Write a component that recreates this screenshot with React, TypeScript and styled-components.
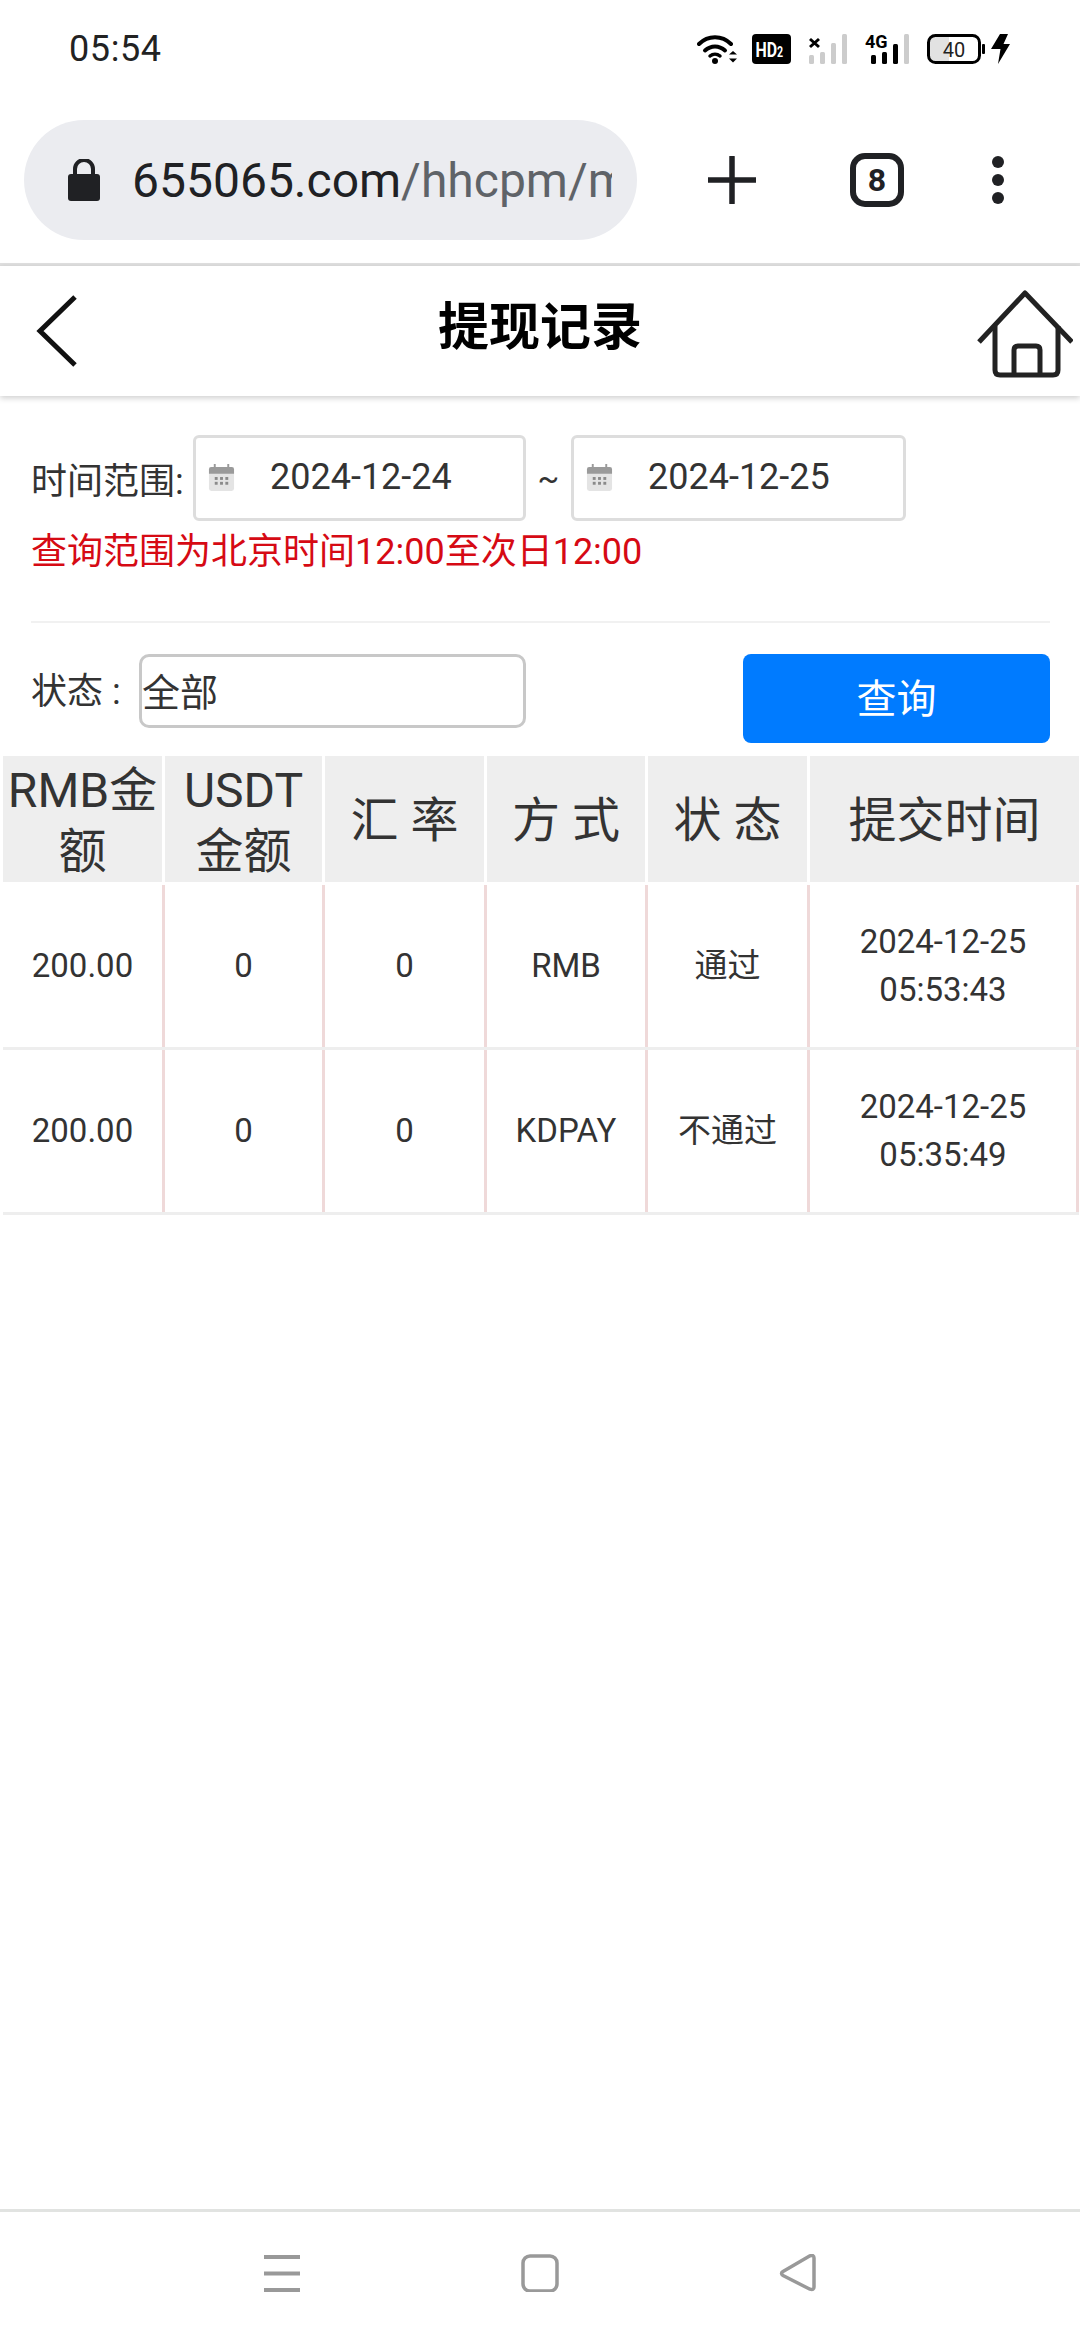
import React from "react";
import styled, { createGlobalStyle } from "styled-components";

const Global = createGlobalStyle`
  html, body { margin: 0; padding: 0; background: #fff; }
  * { box-sizing: border-box; }
  body { font-family: Roboto, "Noto Sans CJK SC", sans-serif; color: #333; }
`;

const Page = styled.div`
  width: 1080px;
  height: 2340px;
  display: flex;
  flex-direction: column;
  overflow: hidden;
  background: #fff;
`;

/* ---------- phone status bar ---------- */
const StatusBar = styled.div`
  height: 100px;
  flex: none;
  display: flex;
  align-items: center;
  padding: 0 70px 2px 69px;
  justify-content: space-between;
`;
const Clock = styled.span`
  font-size: 36px;
  color: #222;
  letter-spacing: 0.6px;
`;
const StatusIcons = styled.div`
  display: flex;
  align-items: center;
  gap: 0;
`;
const StatusSvg = styled.svg<{ $ml?: number }>`
  display: block;
  margin-left: ${(p) => p.$ml ?? 0}px;
`;

/* ---------- browser toolbar ---------- */
const BrowserBar = styled.div`
  height: 166px;
  flex: none;
  display: flex;
  align-items: flex-start;
  padding: 20px 0 0 24px;
  border-bottom: 3px solid #e0e0e0;
`;
const UrlPill = styled.div`
  width: 613px;
  height: 120px;
  border-radius: 60px;
  background: #ebecf0;
  display: flex;
  align-items: center;
  padding: 0 25px 0 44px;
  flex: none;
`;
const UrlText = styled.div`
  margin: 2px 0 0 32px;
  width: 480px;
  overflow: hidden;
  white-space: nowrap;
  font-size: 48px;
  line-height: 60px;
  color: #5f6368;
`;
const UrlHost = styled.span`
  color: #202124;
`;
const BrowserActions = styled.div`
  display: flex;
  align-items: center;
  height: 120px;
  margin-left: 71px;
`;
const ActionSvg = styled.svg<{ $ml?: number }>`
  display: block;
  margin-left: ${(p) => p.$ml ?? 0}px;
`;

/* ---------- page header ---------- */
const Header = styled.header`
  height: 130px;
  flex: none;
  display: flex;
  align-items: center;
  justify-content: space-between;
  padding: 0 7px 0 36px;
  background: #fff;
  box-shadow: 0 2px 6px rgba(0, 0, 0, 0.2);
  position: relative;
`;
const Title = styled.h1`
  margin: 0;
  font-size: 51px;
  line-height: 60px;
  font-weight: 700;
  color: #000;
  position: absolute;
  left: 0;
  right: 0;
  top: 32px;
  text-align: center;
`;
const HomeIcon = styled.svg`
  display: block;
  margin-top: 6px;
`;

/* ---------- filters ---------- */
const Filters = styled.section`
  padding: 39px 30px 0 31px;
  flex: none;
`;
const DateRow = styled.div`
  display: flex;
  align-items: center;
  height: 86px;
`;
const FieldLabel = styled.span`
  font-size: 36px;
  color: #333;
  white-space: nowrap;
`;
const RangeLabel = styled(FieldLabel)`
  width: 162px;
  flex: none;
`;
const DateBox = styled.div<{ $w: number }>`
  width: ${(p) => p.$w}px;
  height: 86px;
  flex: none;
  border: 3px solid #ddd;
  border-radius: 6px;
  display: flex;
  align-items: center;
  padding: 0 0 2px 12px;
  gap: 35px;
`;
const DateValue = styled.span`
  font-size: 36px;
  color: #333;
`;
const Tilde = styled.span`
  width: 45px;
  flex: none;
  text-align: center;
  font-size: 32px;
  color: #333;
`;
const Note = styled.p`
  margin: 6px 0 0;
  font-size: 36px;
  line-height: 50px;
  color: #d60a14;
`;
const Divider = styled.hr`
  margin: 44px 0 0;
  border: 0;
  border-top: 2px solid #f1f1f1;
`;
const StatusRow = styled.div`
  margin-top: 31px;
  display: flex;
  align-items: flex-start;
`;
const StatusLabel = styled(FieldLabel)`
  width: 108px;
  flex: none;
  line-height: 76px;
`;
const SelectBox = styled.div`
  width: 387px;
  height: 74px;
  flex: none;
  border: 3px solid #c8c8c8;
  border-radius: 10px;
  display: flex;
  align-items: center;
  padding: 0 0 4px;
  font-size: 38px;
  color: #333;
`;
const QueryButton = styled.button`
  margin-left: auto;
  width: 307px;
  height: 89px;
  border: 0;
  border-radius: 8px;
  padding: 0 0 5px;
  background: #007bff;
  color: #fff;
  font-family: inherit;
  font-size: 40px;
`;

/* ---------- table ---------- */
const Table = styled.section`
  margin: 13px 1px 0 3px;
  flex: none;
`;
const columns = "162px 160px 162px 161px 162px 1fr";
const HeadRow = styled.div`
  display: grid;
  grid-template-columns: ${columns};
  height: 126px;
`;
const HeadCell = styled.div`
  background: #eee;
  background-clip: padding-box;
  border-right: 3px solid #fff;
  display: flex;
  align-items: center;
  justify-content: center;
  text-align: center;
  padding-top: 3px;
  font-size: 48px;
  line-height: 61px;
  color: #333;
  &:last-child {
    border-right: 0;
  }
`;
const DataRow = styled.div`
  display: grid;
  grid-template-columns: ${columns};
  height: 165px;
  border-bottom: 3px solid #eee;
`;
const Rows = styled.div`
  padding-top: 3px;
`;
const DataCell = styled.div`
  border-right: 3px solid #efd9d9;
  display: flex;
  align-items: center;
  justify-content: center;
  text-align: center;
  font-size: 33px;
  line-height: 48px;
  color: #333;
`;

const Spacer = styled.div`
  flex: 1;
`;

/* ---------- phone nav bar ---------- */
const NavBar = styled.nav`
  height: 131px;
  flex: none;
  border-top: 3px solid #e1e3e1;
  display: flex;
  align-items: flex-start;
  padding: 42px 0 0 263px;
`;
const NavSvg = styled.svg<{ $ml: number }>`
  display: block;
  margin-left: ${(p) => p.$ml}px;
`;

const Calendar = () => (
  <svg width="27" height="27" viewBox="0 0 28 28">
    <rect x="1" y="3" width="26" height="25" rx="2.5" fill="#e4e4e4" />
    <path d="M3.5 3H24.5A2.5 2.5 0 0 1 27 5.500V10H1V5.500A2.500 2.500 0 0 1 3.500 3Z" fill="#9a9a9a" />
    <rect x="6" y="0" width="2" height="4" fill="#9a9a9a" />
    <rect x="20" y="0" width="2" height="4" fill="#9a9a9a" />
    {[7, 12.5, 18].map((x) =>
      [13.5, 18.5].map((y) => <rect key={`${x}-${y}`} x={x} y={y} width="3" height="3" fill="#8a8a8a" />)
    )}
  </svg>
);

const rows = [
  { rmb: "200.00", usdt: "0", rate: "0", way: "RMB", state: "通过", date: "2024-12-25", time: "05:53:43" },
  { rmb: "200.00", usdt: "0", rate: "0", way: "KDPAY", state: "不通过", date: "2024-12-25", time: "05:35:49" },
];

export default function App() {
  return (
    <Page>
      <Global />
      <StatusBar>
        <Clock>05:54</Clock>
        <StatusIcons>
          <StatusSvg width="42" height="32" viewBox="0 0 42 32">
            <path d="M2 11C11 2 25 2 34 11" fill="none" stroke="#000" strokeWidth="4" strokeLinecap="round" />
            <path d="M8 17.5C14 12 22 12 28 17.5" fill="none" stroke="#000" strokeWidth="4" strokeLinecap="round" />
            <path d="M13 23C16 20.5 20 20.5 23 23" fill="none" stroke="#000" strokeWidth="3.5" strokeLinecap="round" />
            <circle cx="18" cy="28" r="3" fill="#000" />
            <path d="M32 21.5L36 18L40 21.5ZM32 25.5L36 29.5L40 25.5Z" fill="#000" />
          </StatusSvg>
          <StatusSvg $ml={13} width="39" height="30" viewBox="0 0 39 30">
            <rect width="39" height="30" rx="4" fill="#000" />
            <text transform="scale(0.76 1)" x="4.6" y="23" fontFamily="Roboto" fontWeight="700" fontSize="21" fill="#fff">
              HD<tspan fontSize="14">2</tspan>
            </text>
          </StatusSvg>
          <StatusSvg $ml={18} width="38" height="30" viewBox="0 0 38 30">
            <path d="M1 5L10 13M10 5L1 13" stroke="#000" strokeWidth="3" />
            <rect x="0" y="21" width="5" height="9" rx="1.5" fill="#ccc" />
            <rect x="11" y="18" width="5" height="12" rx="1.5" fill="#ccc" />
            <rect x="22" y="9" width="5" height="21" rx="1.5" fill="#ccc" />
            <rect x="33" y="0" width="5" height="30" rx="1.5" fill="#ccc" />
          </StatusSvg>
          <StatusSvg $ml={18} width="44" height="30" viewBox="0 0 44 30">
            <text x="0" y="14" fontFamily="Roboto" fontWeight="700" fontSize="18" fill="#000">4G</text>
            <rect x="6" y="21" width="5" height="9" rx="1.5" fill="#000" />
            <rect x="17" y="18" width="5" height="12" rx="1.5" fill="#000" />
            <rect x="28" y="10" width="5" height="20" rx="1.5" fill="#000" />
            <rect x="39" y="0" width="5" height="30" rx="1.5" fill="#ccc" />
          </StatusSvg>
          <StatusSvg $ml={18} width="58" height="30" viewBox="0 0 58 30">
            <path d="M9 2H22V28H9A6 6 0 0 1 3 22V8A6 6 0 0 1 9 2Z" fill="#e2e2e2" />
            <rect x="1.5" y="1.5" width="51" height="27" rx="7" fill="none" stroke="#000" strokeWidth="3" />
            <rect x="55" y="10" width="3" height="10" rx="1" fill="#000" />
            <text x="27" y="22.5" textAnchor="middle" fontFamily="Roboto" fontSize="20" fill="#222">40</text>
          </StatusSvg>
          <StatusSvg $ml={6} width="19" height="30" viewBox="0 0 19 30">
            <path d="M9 0H17L12.5 10H19L7 30L9.5 15H0Z" fill="#000" />
          </StatusSvg>
        </StatusIcons>
      </StatusBar>

      <BrowserBar>
        <UrlPill>
          <svg width="32" height="42" viewBox="0 0 32 42">
            <path d="M7 17V10A9 9 0 0 1 25 10V17" fill="none" stroke="#202124" strokeWidth="4" />
            <rect x="0" y="15" width="32" height="27" rx="3" fill="#202124" />
          </svg>
          <UrlText>
            <UrlHost>655065.com</UrlHost>/hhcpm/mem
          </UrlText>
        </UrlPill>
        <BrowserActions>
          <ActionSvg width="48" height="48" viewBox="0 0 48 48">
            <path d="M24 1V47M1 24H47" stroke="#202124" strokeWidth="5.5" strokeLinecap="round" />
          </ActionSvg>
          <ActionSvg $ml={94} width="54" height="54" viewBox="0 0 54 54">
            <rect x="3" y="3" width="48" height="48" rx="12" fill="none" stroke="#202124" strokeWidth="6" />
            <text x="27" y="38" textAnchor="middle" fontFamily="Roboto" fontWeight="700" fontSize="32" fill="#202124">8</text>
          </ActionSvg>
          <ActionSvg $ml={87} width="14" height="50" viewBox="0 0 14 50">
            <circle cx="7" cy="7" r="6" fill="#202124" />
            <circle cx="7" cy="25" r="6" fill="#202124" />
            <circle cx="7" cy="43" r="6" fill="#202124" />
          </ActionSvg>
        </BrowserActions>
      </BrowserBar>

      <Header>
        <svg width="42" height="72" viewBox="0 0 42 72">
          <path d="M39 2L4 36L39 70" fill="none" stroke="#111" strokeWidth="5" />
        </svg>
        <Title>提现记录</Title>
        <HomeIcon width="97" height="88" viewBox="0 0 97 88">
          <path d="M3 52L49 3L96 52" fill="none" stroke="#222" strokeWidth="5" strokeLinejoin="round" />
          <path d="M19 36V80Q19 85 24 85H77Q82 85 82 80V36" fill="none" stroke="#222" strokeWidth="5" />
          <path d="M38 85V60Q38 56 42 56H60Q64 56 64 60V85" fill="none" stroke="#222" strokeWidth="5" />
        </HomeIcon>
      </Header>

      <Filters>
        <DateRow>
          <RangeLabel>时间范围:</RangeLabel>
          <DateBox $w={333}>
            <Calendar />
            <DateValue>2024-12-24</DateValue>
          </DateBox>
          <Tilde>~</Tilde>
          <DateBox $w={335}>
            <Calendar />
            <DateValue>2024-12-25</DateValue>
          </DateBox>
        </DateRow>
        <Note>查询范围为北京时间12:00至次日12:00</Note>
        <Divider />
        <StatusRow>
          <StatusLabel>状态 :</StatusLabel>
          <SelectBox>全部</SelectBox>
          <QueryButton>查询</QueryButton>
        </StatusRow>
      </Filters>

      <Table>
        <HeadRow>
          <HeadCell>RMB金额</HeadCell>
          <HeadCell>USDT金额</HeadCell>
          <HeadCell>汇 率</HeadCell>
          <HeadCell>方 式</HeadCell>
          <HeadCell>状 态</HeadCell>
          <HeadCell>提交时间</HeadCell>
        </HeadRow>
        <Rows>
          {rows.map((r) => (
            <DataRow key={r.time}>
              <DataCell>{r.rmb}</DataCell>
              <DataCell>{r.usdt}</DataCell>
              <DataCell>{r.rate}</DataCell>
              <DataCell>{r.way}</DataCell>
              <DataCell>{r.state}</DataCell>
              <DataCell>
                {r.date}
                <br />
                {r.time}
              </DataCell>
            </DataRow>
          ))}
        </Rows>
      </Table>

      <Spacer />

      <NavBar>
        <NavSvg $ml={0} width="38" height="38" viewBox="0 0 38 38">
          <path d="M1 3H37M1 19.5H37M1 36H37" stroke="#999" strokeWidth="4" />
        </NavSvg>
        <NavSvg $ml={220} width="38" height="38" viewBox="0 0 38 38">
          <rect x="2" y="2" width="34" height="35" rx="7" fill="none" stroke="#999" strokeWidth="3.5" />
        </NavSvg>
        <NavSvg $ml={220} width="38" height="38" viewBox="0 0 38 38">
          <path d="M4 17.5L31 1.800Q35 0.500 35 4V33Q35 36.500 31 35.200L4 21.500Q1 19.500 4 17.500Z" fill="none" stroke="#999" strokeWidth="3.5" strokeLinejoin="round" />
        </NavSvg>
      </NavBar>
    </Page>
  );
}
